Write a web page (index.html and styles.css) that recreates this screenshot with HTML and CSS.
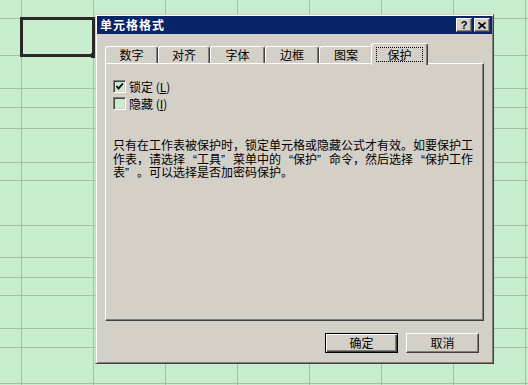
FILE: index.html
```html
<!DOCTYPE html>
<html lang="zh-CN">

<head>
  <meta charset="UTF-8">
  <title>单元格格式</title>
  <link rel="stylesheet" href="styles.css">
</head>

<body>
  <div class="sheet">
    <div class="row"></div>
    <div class="row"></div>
    <div class="row"></div>
    <div class="row"></div>
    <div class="row"></div>
    <div class="row"></div>
    <div class="row"></div>
    <div class="row"></div>
    <div class="row"></div>
    <div class="row"></div>
    <div class="row"></div>
    <div class="row"></div>
    <div class="row"></div>
    <div class="row"></div>
    <div class="cursor"><span class="handle"></span></div>
  </div>

  <div class="dialog">
    <div class="titlebar">
      <span class="title">单元格格式</span>
      <div class="caption-btns">
        <button class="cap-btn help">?</button>
        <button class="cap-btn close">
          <svg width="8" height="7" viewBox="0 0 8 7">
            <path d="M0.5 0.5 L7.5 6.5 M7.5 0.5 L0.5 6.5" stroke="#000" stroke-width="1.6" fill="none" />
          </svg>
        </button>
      </div>
    </div>
    <div class="body">
      <ul class="tabs">
        <li class="tab w53">数字</li>
        <li class="tab w52">对齐</li>
        <li class="tab w55">字体</li>
        <li class="tab w54">边框</li>
        <li class="tab w54">图案</li>
        <li class="tab active"><span class="focus">保护</span></li>
      </ul>
      <div class="panel">
        <label class="check">
          <span class="box">
            <svg width="9" height="9" viewBox="0 0 9 9">
              <path d="M1.5 4 L3.5 6.5 L7.8 1.5" stroke="#000" stroke-width="1.8" fill="none" />
            </svg>
          </span>
          锁定 (<u>L</u>)
        </label>
        <label class="check">
          <span class="box"></span>
          隐藏 (<u>I</u>)
        </label>
        <p class="hint">
          只有在工作表被保护时，锁定单元格或隐藏公式才有效。如要保护工<br>
          作表，请选择<span class="ql">“</span>工具<span class="qr">”</span>菜单中的<span class="ql">“</span>保护<span class="qr">”</span>命令，然后选择<span class="ql">“</span>保护工作<br>
          表<span class="qr">”</span>。可以选择是否加密码保护。
        </p>
      </div>
      <div class="actions">
        <button class="btn default">确定</button>
        <button class="btn">取消</button>
      </div>
    </div>
  </div>
</body>

</html>
```

FILE: styles.css
```css
body {
  margin: 0;
  font-family: "Noto Sans CJK SC", "Liberation Sans", sans-serif;
  font-size: 12px;
  color: #000;
}

/* worksheet behind the dialog */
.sheet {
  position: relative;
  width: 528px;
  height: 385px;
  overflow: hidden;
  display: grid;
  grid-template-rows: 19px 37px 33px 19px 21px 34px 18px 45px 32px 20px 18px 33px 19px 36px;
  background-color: #c7edcc;
  background-image: linear-gradient(to right, #a5bea8 0, #a5bea8 1px, transparent 1px);
  background-size: 72px 100%;
  background-position: 21px 0;
}

.sheet .row {
  box-sizing: border-box;
  border-bottom: 1px solid #a5bea8;
}

.cursor {
  position: absolute;
  left: 20px;
  top: 17px;
  width: 75px;
  height: 40px;
  box-sizing: border-box;
  border: 3px solid #2b2727;
}

.cursor .handle {
  position: absolute;
  right: -4px;
  bottom: -4px;
  width: 5px;
  height: 5px;
  background: #2b2727;
}

/* dialog */
.dialog {
  position: absolute;
  left: 95px;
  top: 14px;
  width: 399px;
  height: 350px;
  box-sizing: border-box;
  padding: 1px;
  background: #d4d0c8;
  border: 1px solid;
  border-color: #d4d0c8 #404040 #404040 #d4d0c8;
  box-shadow: inset 1px 1px #fff, inset -1px -1px #808080;
  display: flex;
  flex-direction: column;
}

.titlebar {
  height: 18px;
  background: #0a246a;
  display: flex;
  align-items: center;
  justify-content: space-between;
  padding: 0 2px 0 3px;
}

.titlebar .title {
  color: #fff;
  font-weight: bold;
  letter-spacing: 1px;
  line-height: 18px;
}

.caption-btns {
  display: flex;
  gap: 2px;
}

.cap-btn {
  width: 16px;
  height: 14px;
  padding: 0;
  margin: 0;
  box-sizing: border-box;
  background: #d4d0c8;
  border: 1px solid;
  border-color: #fff #404040 #404040 #fff;
  box-shadow: inset -1px -1px #808080;
  display: flex;
  align-items: center;
  justify-content: center;
  font-family: "Liberation Sans", sans-serif;
  font-weight: bold;
  font-size: 11px;
  line-height: 12px;
}

.body {
  flex: 1;
  display: flex;
  flex-direction: column;
  padding: 9px 8px 8px 8px;
}

.tabs {
  list-style: none;
  margin: 0;
  padding: 0;
  height: 20px;
  display: flex;
  align-items: flex-end;
}

.tab {
  height: 17px;
  box-sizing: border-box;
  border: 1px solid;
  border-bottom: 0;
  border-color: #fff #404040 transparent #fff;
  border-radius: 3px 3px 0 0;
  box-shadow: inset -1px 0 #808080;
  text-align: center;
  line-height: 15px;
}

.w52 { width: 52px; }
.w53 { width: 53px; }
.w54 { width: 54px; }
.w55 { width: 55px; }

.tab.active {
  position: relative;
  z-index: 1;
  width: 57px;
  height: 22px;
  margin-left: -2px;
  margin-bottom: -2px;
  background: #d4d0c8;
  padding-top: 3px;
}

.tab .focus {
  display: block;
  margin: 0 4px;
  height: 15px;
  box-sizing: border-box;
  border: 1px dotted #000;
  line-height: 13px;
}

.panel {
  height: 258px;
  box-sizing: border-box;
  border: 1px solid;
  border-color: #fff #404040 #404040 #fff;
  box-shadow: inset -1px -1px #808080;
  padding: 16px 7px 0 7px;
}

.check {
  display: flex;
  align-items: center;
  height: 13px;
  margin-bottom: 4px;
  line-height: 13px;
}

.check .box {
  width: 13px;
  height: 13px;
  box-sizing: border-box;
  margin-right: 3px;
  background: #c7edcc;
  border: 1px solid;
  border-color: #808080 #fff #fff #808080;
  box-shadow: inset 1px 1px #404040, inset -1px -1px #d4d0c8;
  display: flex;
  align-items: center;
  justify-content: center;
}

.check u {
  text-decoration: underline;
  text-underline-offset: 1px;
}

.hint {
  margin: 30px 0 0 0;
  font-family: "Liberation Sans", "Noto Sans CJK SC", sans-serif;
  line-height: 13.5px;
  white-space: nowrap;
}

/* full-width quote cells */
.hint .ql,
.hint .qr {
  display: inline-block;
  width: 12px;
}

.hint .ql {
  text-align: right;
}

.hint .qr {
  text-align: left;
}

.actions {
  display: flex;
  justify-content: flex-end;
  gap: 8px;
  margin-top: 12px;
  padding-right: 5px;
}

.btn {
  width: 73px;
  height: 20px;
  padding: 0;
  margin: 0;
  box-sizing: border-box;
  background: #d4d0c8;
  font-family: inherit;
  font-size: 12px;
  line-height: 16px;
  border: 1px solid;
  border-color: #fff #404040 #404040 #fff;
  box-shadow: inset -1px -1px #808080;
}

.btn.default {
  border-color: #000;
  box-shadow: inset 1px 1px #fff, inset -1px -1px #404040, inset -2px -2px #808080;
}
```
